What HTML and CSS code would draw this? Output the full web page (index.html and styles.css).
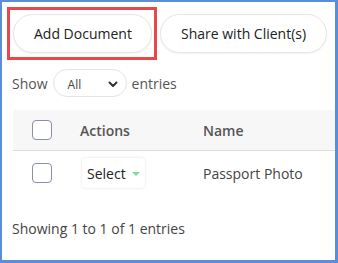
FILE: index.html
```html
<!DOCTYPE html>
<html lang="en">
<head>
    <meta charset="UTF-8">
    <meta name="viewport" content="width=device-width, initial-scale=1.0">
    <title>Documents</title>
    <link rel="stylesheet" href="styles.css">
</head>
<body>
    <div class="frame">
        <div class="toolbar">
            <div class="highlight">
                <button class="pill-button">Add Document</button>
            </div>
            <button class="pill-button share">Share with Client(s)</button>
        </div>

        <div class="length-row">
            <span>Show</span>
            <div class="length-select">
                <span>All</span>
                <svg width="10" height="7" viewBox="0 0 10 7"><path d="M1.5 1.5 L5 5 L8.5 1.5" fill="none" stroke="#333" stroke-width="2" stroke-linecap="round" stroke-linejoin="round"/></svg>
            </div>
            <span>entries</span>
        </div>

        <div class="table">
            <div class="table-row head">
                <div class="cell check"><span class="checkbox"></span></div>
                <div class="cell actions">Actions</div>
                <div class="cell name">Name</div>
            </div>
            <div class="table-row">
                <div class="cell check"><span class="checkbox"></span></div>
                <div class="cell actions">
                    <div class="action-select">Select <span class="caret"></span></div>
                </div>
                <div class="cell name">Passport Photo</div>
            </div>
        </div>

        <p class="info">Showing 1 to 1 of 1 entries</p>
    </div>
</body>
</html>
```

FILE: styles.css
```css
body {
    margin: 0;
    font-family: "Open Sans", Arial, sans-serif;
    background: #fff;
}
.frame {
    width: 338px;
    height: 263px;
    box-sizing: border-box;
    border: 2px solid #5b8ed8;
    border-right-width: 3px;
    border-bottom-width: 3px;
    padding: 5px 0 0 5px;
    overflow: hidden;
    background: #fff;
}
.toolbar {
    display: flex;
    align-items: center;
    gap: 3px;
}
.highlight {
    border: 3px solid #e8484a;
    padding: 4px 2px 4px 3px;
    display: flex;
}
.pill-button {
    font-family: inherit;
    font-size: 14px;
    color: #222;
    background: #fff;
    border: 1px solid #e6e6e6;
    border-radius: 20px;
    height: 39px;
    padding: 0 20px;
    box-shadow: 0 1px 2px rgba(0,0,0,0.06);
    white-space: nowrap;
}
.pill-button:first-child {
    width: 139px;
}
.pill-button.share {
    width: 167px;
}
.length-row {
    display: flex;
    align-items: center;
    gap: 5px;
    margin: 9px 0 0 5px;
    font-size: 14px;
    color: #555;
}
.length-select {
    width: 74px;
    height: 28px;
    box-sizing: border-box;
    border: 1px solid #e4e4e4;
    border-radius: 14px;
    display: flex;
    align-items: center;
    justify-content: space-between;
    padding: 2px 8px 0 14px;
    font-size: 12px;
    color: #444;
}
.table {
    margin: 13px 0 0 6px;
    width: 340px;
}
.table-row {
    display: flex;
    align-items: center;
    height: 44px;
    font-size: 14px;
    color: #444;
}
.table-row.head {
    background: #f7f7f7;
    height: 40px;
    border-bottom: 1px solid #dddddd;
    font-weight: 600;
    color: #555;
}
.cell.check {
    width: 48px;
    padding-left: 19px;
    display: flex;
}
.cell.actions {
    width: 123px;
}
.table-row:not(.head) .cell.check {
    padding-top: 0;
}
.checkbox {
    display: block;
    width: 18px;
    height: 18px;
    border: 1px solid #8a90a8;
    border-radius: 4px;
    background: #fff;
}
.action-select {
    display: inline-flex;
    align-items: center;
    gap: 6px;
    height: 30px;
    padding: 0 5px 0 5px;
    margin-left: 2px;
    border-radius: 4px;
    background: #fff;
    box-shadow: 0 0 3px rgba(0,0,0,0.12);
    color: #222;
}
.caret {
    width: 0;
    height: 0;
    border-left: 4px solid transparent;
    border-right: 4px solid transparent;
    border-top: 4px solid #7ed9a6;
    margin-top: 2px;
}
.info {
    margin: 24px 0 0 5px;
    font-size: 14px;
    color: #444;
}
```
